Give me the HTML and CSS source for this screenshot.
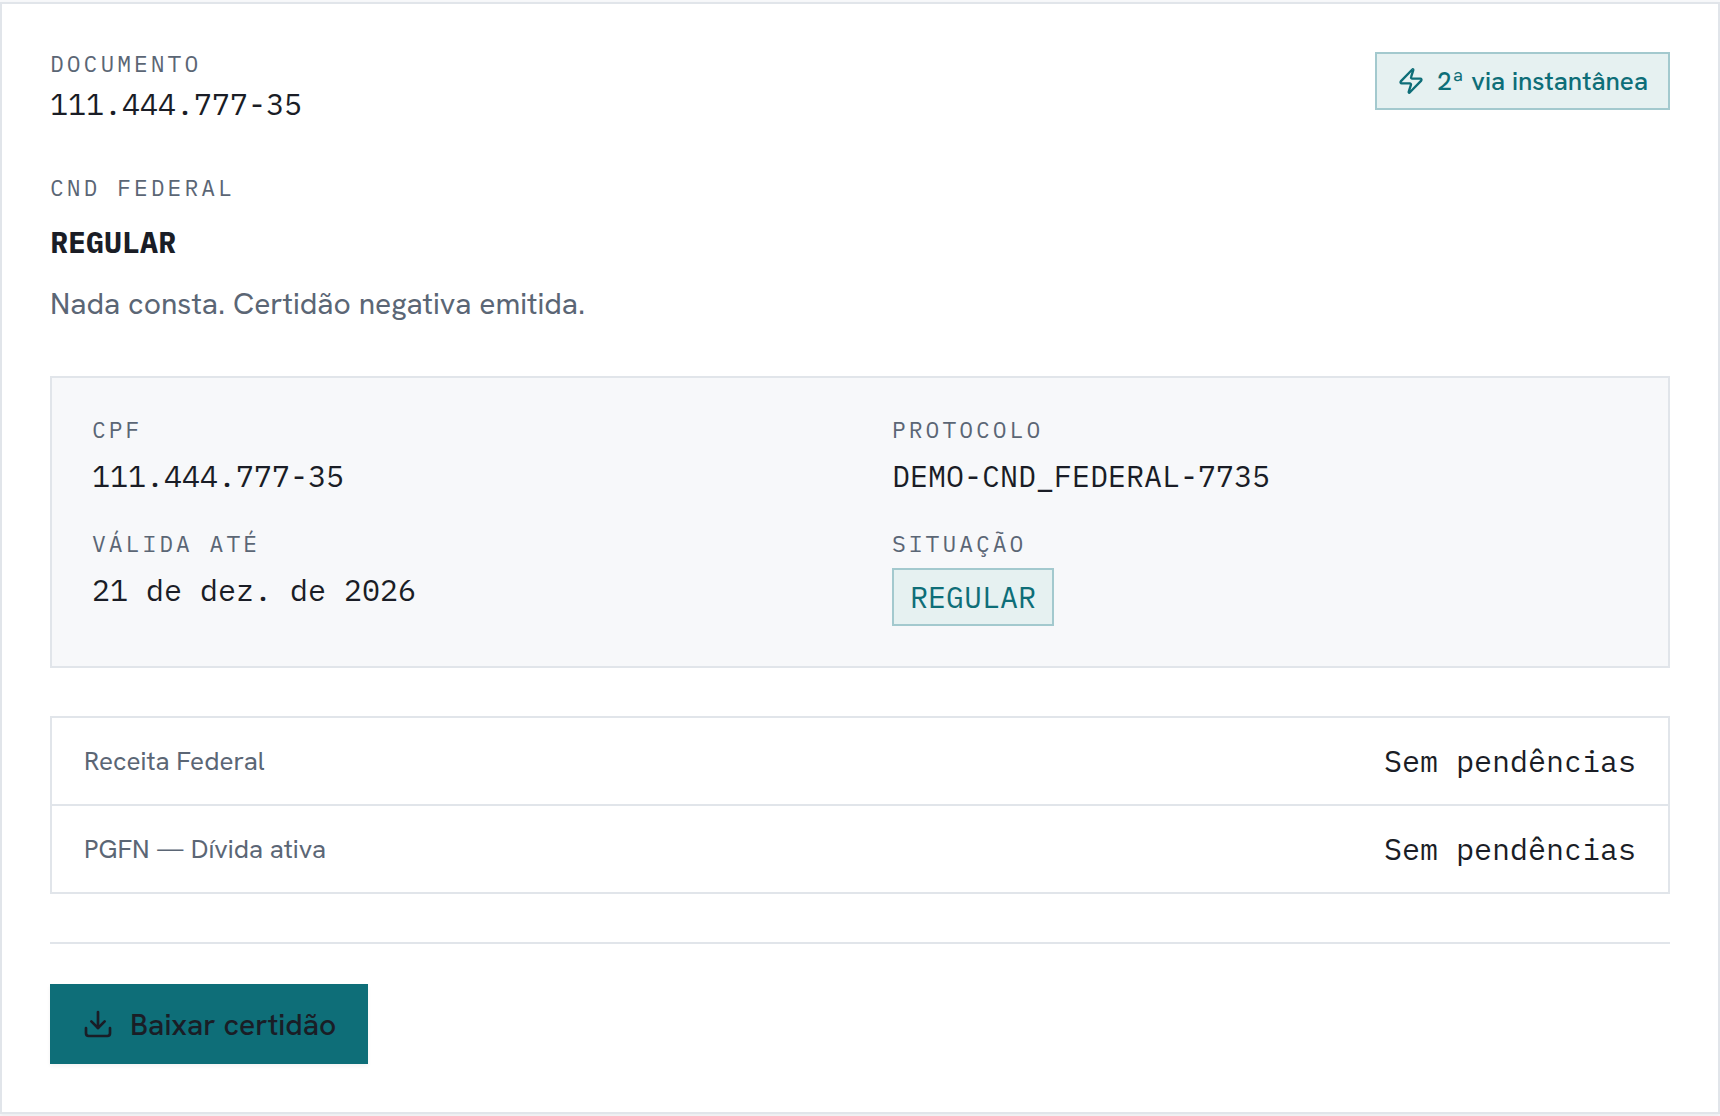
FILE: index.html
```html
<!DOCTYPE html>
<html lang="pt-BR">
<head>
  <meta charset="UTF-8" />
  <meta name="viewport" content="width=device-width, initial-scale=1" />
  <title>CND Federal</title>
  <link rel="stylesheet" href="styles.css">
</head>
<body>
  <main class="card">
    <header class="card-header">
      <div class="document">
        <span class="label">DOCUMENTO</span>
        <span class="value">111.444.777-35</span>
      </div>
      <span class="badge badge-instant">
        <svg class="icon-sm" viewBox="0 0 24 24" aria-hidden="true">
          <path d="M4 14a1 1 0 0 1-.78-1.63l9.9-10.2a.5.5 0 0 1 .86.46l-1.92 6.02A1 1 0 0 0 13 10h7a1 1 0 0 1 .78 1.63l-9.9 10.2a.5.5 0 0 1-.86-.46l1.92-6.02A1 1 0 0 0 11 14z" />
        </svg>
        2ª via instantânea
      </span>
    </header>

    <section class="result">
      <span class="label">CND FEDERAL</span>
      <h1>REGULAR</h1>
      <p>Nada consta. Certidão negativa emitida.</p>
    </section>

    <dl class="details">
      <div class="detail">
        <dt class="label">CPF</dt>
        <dd class="value">111.444.777-35</dd>
      </div>
      <div class="detail">
        <dt class="label">PROTOCOLO</dt>
        <dd class="value">DEMO-CND_FEDERAL-7735</dd>
      </div>
      <div class="detail">
        <dt class="label">VÁLIDA ATÉ</dt>
        <dd class="value">21 de dez. de 2026</dd>
      </div>
      <div class="detail">
        <dt class="label">SITUAÇÃO</dt>
        <dd class="badge badge-status">REGULAR</dd>
      </div>
    </dl>

    <dl class="checks">
      <div class="check">
        <dt>Receita Federal</dt>
        <dd class="value">Sem pendências</dd>
      </div>
      <div class="check">
        <dt>PGFN — Dívida ativa</dt>
        <dd class="value">Sem pendências</dd>
      </div>
    </dl>

    <footer class="card-footer">
      <button type="button" class="btn">
        <svg class="icon" viewBox="0 0 24 24" aria-hidden="true">
          <path d="M12 15V3" />
          <path d="M21 15v4a2 2 0 0 1-2 2H5a2 2 0 0 1-2-2v-4" />
          <path d="m7 10 5 5 5-5" />
        </svg>
        Baixar certidão
      </button>
    </footer>
  </main>
</body>
</html>
```
FILE: styles.css
```css
:root {
  --ink: #1a1d26;
  --muted: #5b6675;
  --line: #e1e5ea;
  --surface: #f7f8fa;
  --teal: #0e6e78;
  --teal-soft: #e6f1f1;
  --teal-line: #a3c9ce;
  --sans: "Hanken Grotesk", Roboto, sans-serif;
  --mono: "IBM Plex Mono", "DejaVu Sans Mono", monospace;
}

* {
  box-sizing: border-box;
}

body {
  margin: 0;
  padding: 2px 0;
  background: var(--surface);
  color: var(--ink);
  font-family: var(--sans);
  font-size: 30px;
  line-height: 44px;
}

h1, p, dl, dd {
  margin: 0;
}

.card {
  padding: 48px;
  background: #fff;
  border: 2px solid var(--line);
  box-shadow: 0 2px 4px rgba(0, 0, 0, 0.05);
}

.card-header {
  display: flex;
  justify-content: space-between;
  align-items: flex-start;
  gap: 32px;
  margin-bottom: 50px;
}

.document {
  display: flex;
  flex-direction: column;
  gap: 8px;
}

.label {
  display: block;
  font-family: var(--mono);
  font-size: 23px;
  line-height: 22px;
  letter-spacing: 3px;
  color: var(--muted);
}

.value {
  font-family: var(--mono);
}

/* Badges */
.badge {
  display: flex;
  align-items: center;
  height: 58px;
  border: 2px solid var(--teal-line);
  background: var(--teal-soft);
  color: var(--teal);
}

.badge-instant {
  gap: 12px;
  padding: 0 20px;
  font-size: 26px;
  font-weight: 500;
}

.badge-status {
  padding: 0 16px;
  font-family: var(--mono);
}

svg {
  flex: none;
  fill: none;
  stroke: currentColor;
  stroke-width: 2;
  stroke-linecap: round;
  stroke-linejoin: round;
}

.icon-sm {
  width: 28px;
  height: 28px;
}

.icon {
  width: 32px;
  height: 32px;
}

/* Result */
.result {
  margin-bottom: 50px;
}

.result h1 {
  margin: 22px 0 18px;
  font-family: var(--mono);
  font-size: 30px;
  font-weight: 700;
}

.result p {
  color: var(--muted);
}

/* Details grid */
.details {
  display: grid;
  grid-template-columns: 1fr 1fr;
  gap: 34px 64px;
  margin-bottom: 48px;
  padding: 40px;
  background: var(--surface);
  border: 2px solid var(--line);
}

.detail {
  display: flex;
  flex-direction: column;
  align-items: flex-start;
  gap: 14px;
}

/* Checks per agency */
.checks {
  margin-bottom: 48px;
  border: 2px solid var(--line);
}

.check {
  display: flex;
  justify-content: space-between;
  gap: 32px;
  padding: 21px 32px;
}

.check + .check {
  border-top: 2px solid var(--line);
}

.check dt {
  font-size: 26px;
  color: var(--muted);
}

.card-footer {
  padding-top: 40px;
  border-top: 2px solid var(--line);
}

.btn {
  display: inline-flex;
  align-items: center;
  gap: 16px;
  height: 80px;
  padding: 0 32px;
  border: none;
  background: var(--teal);
  box-shadow: 0 2px 4px rgba(0, 0, 0, 0.05);
  color: var(--ink);
  font-family: var(--sans);
  font-size: 30px;
  font-weight: 500;
  vertical-align: top;
  cursor: pointer;
}
```
